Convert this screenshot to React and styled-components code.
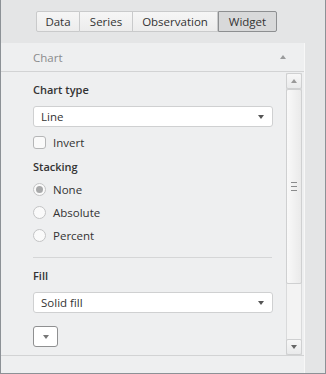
import React from 'react'
import styled, { createGlobalStyle } from 'styled-components'

const Global = createGlobalStyle`
  html, body {
    margin: 0;
    padding: 0;
    background: #e4e5e6;
  }
  * {
    box-sizing: border-box;
  }
`

const Frame = styled.div`
  width: 326px;
  height: 374px;
  display: flex;
  flex-direction: column;
  background: #e4e5e6;
  border: 1px solid #8c9196;
  border-top: none;
  font-family: 'Open Sans', 'Noto Sans', sans-serif;
  font-size: 11.5px;
  color: #333;
`

const Tabs = styled.div`
  display: flex;
  margin: 11px 0 0 35px;
  height: 21px;
`

const Tab = styled.button`
  font: inherit;
  color: #333;
  height: 21px;
  width: ${(p) => p.w}px;
  padding: 0;
  border: 1px solid ${(p) => (p.active ? '#8d8f91' : '#c9cacb')};
  border-left-width: ${(p) => (p.first || p.active ? 1 : 0)}px;
  background: ${(p) =>
    p.active ? '#d8d9da' : 'linear-gradient(#f6f6f6, #ececec)'};
  border-radius: ${(p) => (p.first ? '2px 0 0 2px' : p.last ? '0 2px 2px 0' : '0')};
`

const Panel = styled.div`
  margin-top: 11px;
  width: 304px;
  flex: 1;
  display: flex;
  flex-direction: column;
  background: #eeeff0;
  border-right: 1px solid #f7f7f7;
`

const Header = styled.div`
  height: 29px;
  display: flex;
  align-items: center;
  justify-content: space-between;
  padding: 0 18px 0 32px;
  color: #8a8b8c;
  border-bottom: 1px solid #d2d3d4;
`

const Body = styled.div`
  height: 284px;
  display: flex;
  border-bottom: 1px solid #d2d3d4;
`

const Content = styled.div`
  flex: 1;
  display: flex;
  flex-direction: column;
  padding: 10px 0 0 32px;
  width: 272px;
`

const Label = styled.div`
  font-weight: 600;
  font-size: 11px;
  line-height: 16px;
  height: 16px;
  margin-top: ${(p) => p.mt || 0}px;
`

const Select = styled.div`
  margin-top: 8px;
  width: 240px;
  height: 21px;
  background: #fff;
  border: 1px solid #cfd0d1;
  border-radius: 3px;
  display: flex;
  align-items: center;
  justify-content: space-between;
  padding: 0 8px 0 7px;
`

const Caret = styled.span`
  width: 0;
  height: 0;
  border-left: 3.5px solid transparent;
  border-right: 3.5px solid transparent;
  border-${(p) => (p.up ? 'bottom' : 'top')}: 4px solid ${(p) => p.c || '#555'};
`

const Row = styled.div`
  display: flex;
  align-items: center;
  height: ${(p) => p.h}px;
  gap: 7px;
`

const Box = styled.span`
  width: 13px;
  height: 13px;
  border: 1px solid #b5b6b7;
  border-radius: 3px;
  background: #fafafa;
`

const Radio = styled.span`
  width: 13px;
  height: 13px;
  border: 1px solid #c3c4c5;
  border-radius: 50%;
  background: #fafafa;
  display: flex;
  align-items: center;
  justify-content: center;
  &::after {
    content: '';
    width: 7px;
    height: 7px;
    border-radius: 50%;
    background: ${(p) => (p.on ? '#a8a9aa' : 'transparent')};
  }
`

const Divider = styled.div`
  margin-top: 10px;
  width: 239px;
  height: 1px;
  background: #d5d6d7;
`

const SmallButton = styled.div`
  margin-top: 13px;
  width: 25px;
  height: 21px;
  border: 1px solid #8f9091;
  border-radius: 3px;
  background: #fff;
  display: flex;
  align-items: center;
  justify-content: center;
`

const Scrollbar = styled.div`
  width: 16px;
  margin: 1px 2px 0 0;
  display: flex;
  flex-direction: column;
  background: #f3f3f3;
  border-left: 1px solid #d9dadb;
  border-right: 1px solid #d9dadb;
`

const ArrowButton = styled.div`
  height: 16px;
  margin: 0 -1px;
  display: flex;
  align-items: center;
  justify-content: center;
  background: linear-gradient(#f7f7f7, #e9eaeb);
  border: 1px solid #cfd0d1;
  border-radius: 2px;
`

const Thumb = styled.div`
  height: 195px;
  margin: 0 -1px;
  background: linear-gradient(90deg, #f9f9f9, #eaeaea);
  border: 1px solid #cfd0d1;
  border-radius: 2px;
  display: flex;
  flex-direction: column;
  align-items: center;
  justify-content: center;
  gap: 3px;
  & span {
    width: 6px;
    height: 1px;
    background: #8a8b8c;
  }
`

const Track = styled.div`
  flex: 1;
`

export default function App() {
  const tabs = [
    { name: 'Data', w: 44 },
    { name: 'Series', w: 53 },
    { name: 'Observation', w: 85 },
    { name: 'Widget', w: 59 },
  ]
  return (
    <>
      <Global />
      <Frame>
        <Tabs>
          {tabs.map((t, i) => (
            <Tab
              key={t.name}
              w={t.w}
              first={i === 0}
              last={i === tabs.length - 1}
              active={t.name === 'Widget'}
            >
              {t.name}
            </Tab>
          ))}
        </Tabs>
        <Panel>
          <Header>
            Chart
            <Caret up c="#9a9b9c" />
          </Header>
          <Body>
            <Content>
              <Label>Chart type</Label>
              <Select>
                Line
                <Caret />
              </Select>
              <Row h={17} style={{ marginTop: 7 }}>
                <Box />
                Invert
              </Row>
              <Label mt={8}>Stacking</Label>
              <Row h={23} style={{ marginTop: 3 }}>
                <Radio on />
                None
              </Row>
              <Row h={23}>
                <Radio />
                Absolute
              </Row>
              <Row h={23}>
                <Radio />
                Percent
              </Row>
              <Divider />
              <Label mt={10}>Fill</Label>
              <Select>
                Solid fill
                <Caret />
              </Select>
              <SmallButton>
                <Caret c="#777" />
              </SmallButton>
            </Content>
            <Scrollbar>
              <ArrowButton>
                <Caret up c="#999" />
              </ArrowButton>
              <Thumb>
                <span />
                <span />
                <span />
              </Thumb>
              <Track />
              <ArrowButton>
                <Caret c="#666" />
              </ArrowButton>
            </Scrollbar>
          </Body>
        </Panel>
      </Frame>
    </>
  )
}
